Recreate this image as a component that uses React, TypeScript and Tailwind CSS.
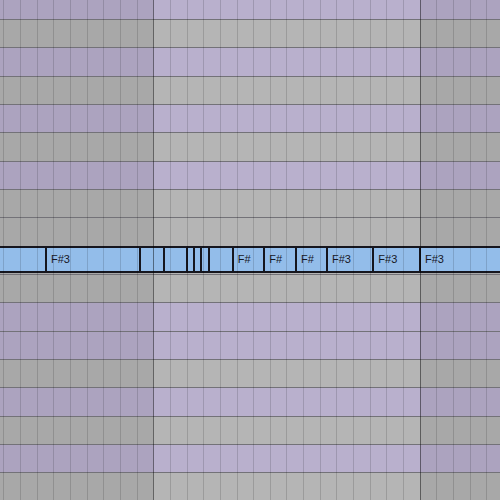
import React from "react";

type RowKind = "P" | "G";

const ROW_H = 85 / 3;

// rows from top (first one is partially visible)
const rowKinds: RowKind[] = [
  "P", "G", "P", "G", "P", "G", "P", "G", "G", "G", "G", "P", "P", "G", "P", "G", "P", "G",
];
const NOTE_ROW = 9;

const colors: Record<RowKind, { dark: string; light: string }> = {
  P: { dark: "bg-[#aca3bf]", light: "bg-[#b9b0cd]" },
  G: { dark: "bg-[#a8a8a8]", light: "bg-[#b5b5b5]" },
};

const bounds = [-6, 46, 139.5, 163.5, 187, 194, 201.3, 209, 232.7, 264.3, 296, 327, 373.3, 420, 506];
const labels = ["", "F#3", "", "", "", "", "", "", "F#", "F#", "F#", "F#3", "F#3", "F#3"];

function Notes() {
  return (
    <div className="absolute left-0 right-0 top-[-1px] h-[27px]">
      {labels.map((label, i) => (
        <div
          key={i}
          className="absolute top-0 bottom-0 flex items-center border-x border-y-2 border-[#16161e] bg-[#93bdea] pl-[4px] overflow-hidden"
          style={{ left: bounds[i], width: bounds[i + 1] - bounds[i] }}
        >
          <span className="text-[11px] leading-none text-[#17171f] whitespace-nowrap" style={{ fontFamily: '"Liberation Sans", Arial, sans-serif' }}>
            {label}
          </span>
        </div>
      ))}
    </div>
  );
}

export default function App() {
  const cols = Array.from({ length: 30 }, (_, k) => k);
  return (
    <div className="relative w-[500px] h-[500px] overflow-hidden bg-[#a9a9a9]">
      <div className="flex flex-col">
        {rowKinds.map((kind, i) => (
          <div
            key={i}
            className={`relative flex shrink-0 ${i === 0 ? "" : "border-t border-[#737278]"}`}
            style={{ height: i === 0 ? 19 : ROW_H }}
          >
            <div className={`w-[153.33px] shrink-0 ${colors[kind].dark}`} />
            <div className={`w-[266.67px] shrink-0 ${colors[kind].light}`} />
            <div className={`flex-1 ${colors[kind].dark}`} />
            {i === NOTE_ROW && <Notes />}
          </div>
        ))}
      </div>
      <div className="pointer-events-none absolute inset-0 flex">
        <div className="w-[3.33px] shrink-0" />
        {cols.map((k) => (
          <div
            key={k}
            className={`w-[16.667px] shrink-0 border-l ${k === 9 || k === 25 ? "border-black/45" : "border-black/[0.14]"}`}
          />
        ))}
      </div>
    </div>
  );
}
